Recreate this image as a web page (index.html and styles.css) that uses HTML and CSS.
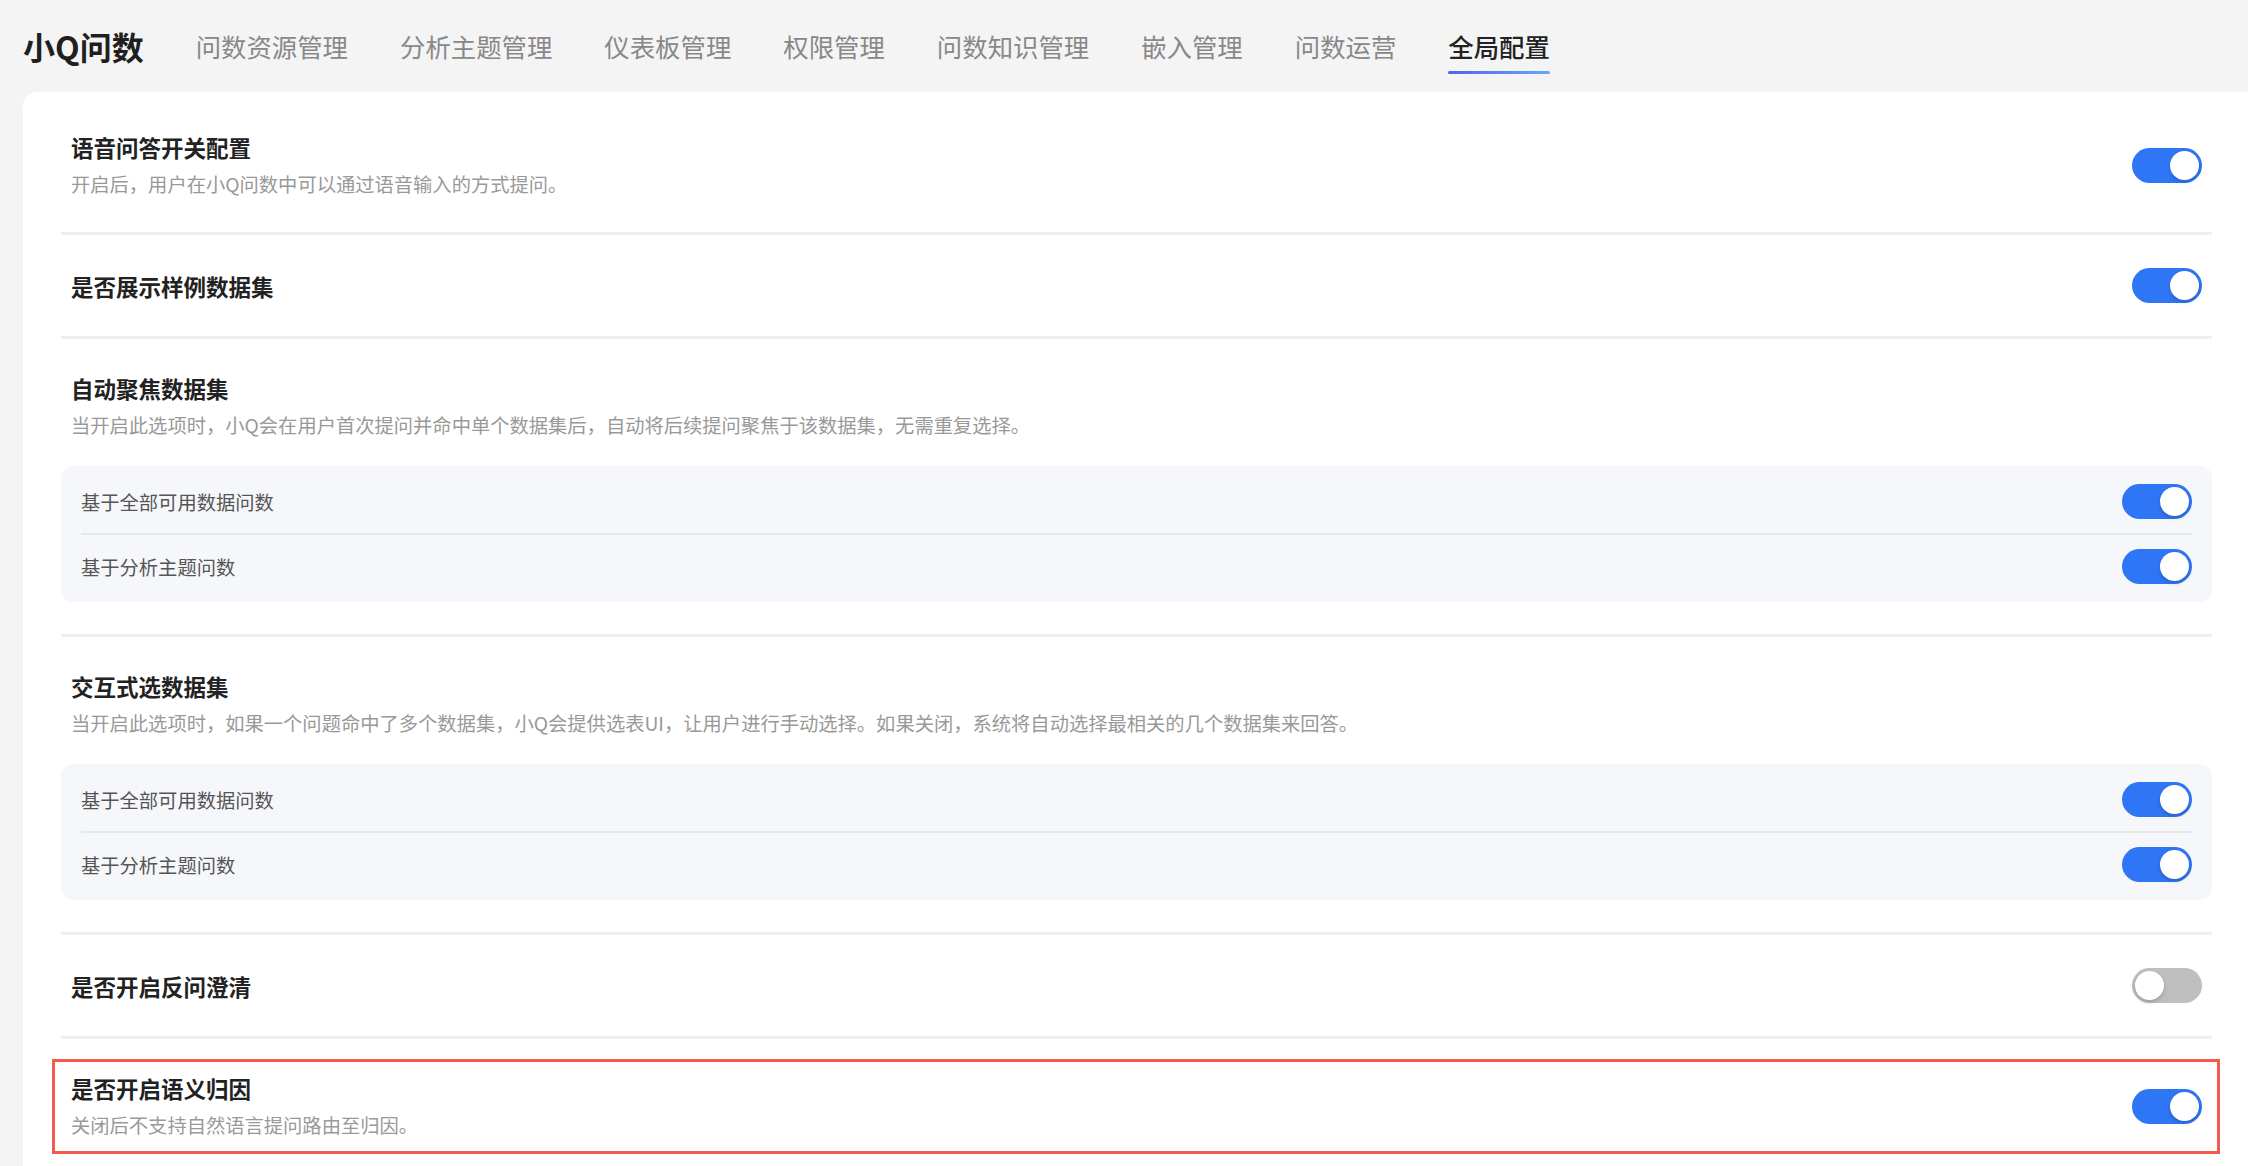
FILE: index.html
```html
<!DOCTYPE html>
<html lang="zh-CN">
<head>
  <meta charset="UTF-8">
  <meta name="viewport" content="width=device-width, initial-scale=1.0">
  <title>小Q问数 - 全局配置</title>
  <link rel="stylesheet" href="styles.css">
</head>
<body>
  <!-- Top navigation -->
  <header class="top-nav">
    <div class="logo">小Q问数</div>
    <nav class="nav-items">
      <a class="nav-item">问数资源管理</a>
      <a class="nav-item">分析主题管理</a>
      <a class="nav-item">仪表板管理</a>
      <a class="nav-item">权限管理</a>
      <a class="nav-item">问数知识管理</a>
      <a class="nav-item">嵌入管理</a>
      <a class="nav-item">问数运营</a>
      <a class="nav-item active">全局配置</a>
    </nav>
  </header>

  <!-- Settings card -->
  <main class="config-card">
    <div class="setting-row">
      <div class="setting-text">
        <div class="setting-title">语音问答开关配置</div>
        <div class="setting-desc">开启后，用户在小Q问数中可以通过语音输入的方式提问。</div>
      </div>
      <span class="switch on"></span>
    </div>

    <div class="setting-row single">
      <div class="setting-text">
        <div class="setting-title">是否展示样例数据集</div>
      </div>
      <span class="switch on"></span>
    </div>

    <div class="setting-group">
      <div class="setting-title">自动聚焦数据集</div>
      <div class="setting-desc">当开启此选项时，小Q会在用户首次提问并命中单个数据集后，自动将后续提问聚焦于该数据集，无需重复选择。</div>
      <div class="sub-panel">
        <div class="sub-row">
          <span>基于全部可用数据问数</span>
          <span class="switch on"></span>
        </div>
        <div class="sub-row">
          <span>基于分析主题问数</span>
          <span class="switch on"></span>
        </div>
      </div>
    </div>

    <div class="setting-group">
      <div class="setting-title">交互式选数据集</div>
      <div class="setting-desc">当开启此选项时，如果一个问题命中了多个数据集，小Q会提供选表UI，让用户进行手动选择。如果关闭，系统将自动选择最相关的几个数据集来回答。</div>
      <div class="sub-panel">
        <div class="sub-row">
          <span>基于全部可用数据问数</span>
          <span class="switch on"></span>
        </div>
        <div class="sub-row">
          <span>基于分析主题问数</span>
          <span class="switch on"></span>
        </div>
      </div>
    </div>

    <div class="setting-row single">
      <div class="setting-text">
        <div class="setting-title">是否开启反问澄清</div>
      </div>
      <span class="switch off"></span>
    </div>

    <div class="setting-row highlight">
      <div class="setting-text">
        <div class="setting-title">是否开启语义归因</div>
        <div class="setting-desc">关闭后不支持自然语言提问路由至归因。</div>
      </div>
      <span class="switch on"></span>
    </div>
  </main>
</body>
</html>
```

FILE: styles.css
```css
html, body {
  margin: 0;
  padding: 0;
}
body {
  background-color: #f4f4f4;
  font-family: "Noto Sans CJK SC", "Noto Sans", sans-serif;
  color: #222;
  overflow: hidden;
}

/* top navigation */
.top-nav {
  display: flex;
  align-items: center;
  height: 92px;
  padding-left: 23px;
  gap: 52px;
}
.logo {
  font-size: 32px;
  line-height: 40px;
  font-weight: 700;
  color: #1f1f1f;
}
.nav-items {
  display: flex;
  gap: 52px;
}
.nav-item {
  position: relative;
  font-size: 25.4px;
  line-height: 34px;
  color: #888;
  cursor: pointer;
}
.nav-item.active {
  color: #222;
  font-weight: 500;
}
.nav-item.active::after {
  content: "";
  position: absolute;
  left: 0;
  right: 0;
  top: calc(100% + 8px);
  height: 3px;
  border-radius: 2px;
  background: linear-gradient(90deg, #5a5cf2, #63aafb);
}

/* settings card */
.config-card {
  margin-left: 23px;
  background-color: #fff;
  border-radius: 14px 0 0 0;
  padding: 6px 36px 0 38px;
  min-height: 1100px;
}
.setting-row {
  display: flex;
  align-items: center;
  justify-content: space-between;
  padding: 34px 10px;
  border-bottom: 3px solid #f0f0f0;
}
.setting-row.single {
  padding: 33px 10px;
}
.setting-title {
  font-size: 22.5px;
  line-height: 30px;
  font-weight: 700;
  color: #222;
}
.setting-desc {
  margin-top: 9px;
  font-size: 19.3px;
  line-height: 27px;
  color: #999;
}
.setting-group {
  padding: 34px 0 32px;
  border-bottom: 3px solid #f0f0f0;
}
.setting-group > .setting-title,
.setting-group > .setting-desc {
  padding-left: 10px;
}
.sub-panel {
  margin-top: 27px;
  background-color: #f6f7fb;
  border-radius: 12px;
  padding: 4px 20px;
}
.sub-row {
  display: flex;
  align-items: center;
  justify-content: space-between;
  height: 63px;
  font-size: 19.3px;
  color: #555;
}
.sub-row + .sub-row {
  border-top: 2px solid #e7e8ed;
}

/* switches */
.switch {
  position: relative;
  flex-shrink: 0;
  display: inline-block;
  width: 70px;
  height: 35px;
  border-radius: 18px;
  background-color: #2f76f6;
}
.switch::after {
  content: "";
  position: absolute;
  top: 3px;
  right: 3px;
  width: 29px;
  height: 29px;
  border-radius: 50%;
  background-color: #fff;
  box-shadow: 0 2px 4px rgba(0, 0, 0, 0.2);
}
.switch.off {
  background-color: #bfbfbf;
}
.switch.off::after {
  right: auto;
  left: 3px;
}

/* red annotation box */
.highlight {
  position: relative;
  border-bottom: none;
}
.highlight::after {
  content: "";
  position: absolute;
  left: -9px;
  right: -8px;
  top: 20px;
  bottom: 19px;
  border: 3px solid #f5594c;
  pointer-events: none;
}
```
